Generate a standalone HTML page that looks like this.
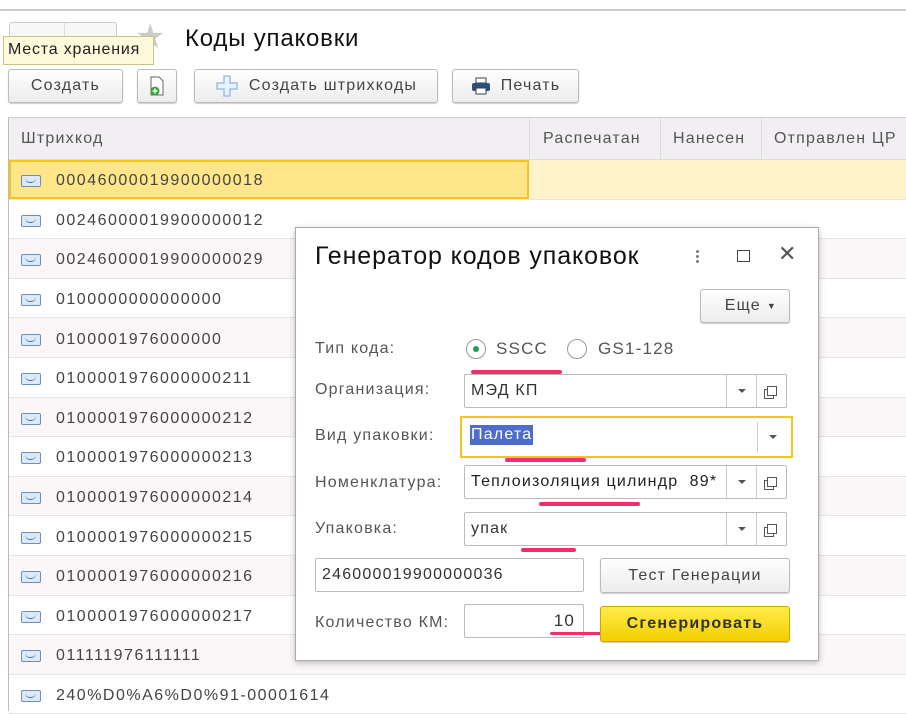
<!DOCTYPE html>
<html><head><meta charset="utf-8"><style>
*{box-sizing:border-box;margin:0;padding:0}
body{width:906px;height:711px;overflow:hidden;background:#fff;font-family:"Liberation Sans",sans-serif;color:#333;position:relative;letter-spacing:1.2px}
.abs{position:absolute}
.btn{position:absolute;height:34px;border:1px solid #bbb;border-radius:3px;background:linear-gradient(#fff,#ececec);box-shadow:0 1px 1px rgba(0,0,0,.2);font-size:16px;color:#444;display:flex;align-items:center;justify-content:center}
.row{position:absolute;left:9px;width:897px;height:39.6px;border-bottom:1px solid #e8e3e6;font-size:16px;color:#444;display:flex;align-items:center;padding-left:12px;padding-top:4px;letter-spacing:1.5px}
.ic{width:20px;height:12px;border:1px solid #6b8fb8;background:#dce9f6;border-radius:2px;margin-right:15px;position:relative}
.ic:after{content:"";position:absolute;left:3px;top:2px;width:11px;height:4px;border-bottom:1.5px solid #3b6fb0;border-radius:0 0 6px 6px}
.lbl{position:absolute;left:19px;font-size:16px;color:#555}
.fld{position:absolute;border:1px solid #bbb;border-radius:2px;background:#fff;font-size:16px;color:#333;display:flex;align-items:center;padding-left:6px}
.dd{position:absolute;top:0;bottom:0;width:30px;border-left:1px solid #ccc;display:flex;align-items:center;justify-content:center}
.dd:after{content:"";border-left:4px solid transparent;border-right:4px solid transparent;border-top:4px solid #555}
.op{position:absolute;right:0;top:0;bottom:0;width:30px;border-left:1px solid #ccc;display:flex;align-items:center;justify-content:center}
.op:after{content:"";width:8px;height:8px;border:1.3px solid #555;box-shadow:-3px 3px 0 -1px #fff,-3px 3px 0 0 #555}
.red{position:absolute;height:4px;background:#f0306a;border-radius:2px}
</style></head><body>
<div class="abs" style="left:0;top:9px;width:906px;height:2px;background:#ccc"></div>
<div class="abs" style="left:9px;top:22px;width:108px;height:30px;border:1px solid #ccc;border-radius:3px;background:#f7f7f7"><div class="abs" style="left:54px;top:0;width:1px;height:28px;background:#ddd"></div></div>
<div class="abs" style="left:135px;top:20px;font-size:34px;color:#ccc;line-height:34px">★</div>
<div class="abs" style="left:3px;top:36px;width:151px;height:29px;background:#fcfadb;border:1px solid #c9c38a;font-size:16px;color:#222;padding:4px 4px;letter-spacing:0.8px">Места хранения</div>
<div class="abs" style="left:185px;top:25px;font-size:24px;color:#111;letter-spacing:0.8px">Коды упаковки</div>
<div class="btn" style="left:8px;top:69px;width:115px">Создать</div>
<div class="btn" style="left:137px;top:69px;width:40px"><svg width="16" height="20"><path d="M2 1h8l4 4v14H2z" fill="#fff" stroke="#666"/><circle cx="6" cy="15" r="4.5" fill="#3aa53a"/><path d="M6 12.5v5M3.5 15h5" stroke="#fff" stroke-width="1.5"/></svg></div>
<div class="btn" style="left:194px;top:69px;width:244px"><svg width="24" height="24" style="margin-right:10px"><path d="M9 2h6v7h7v6h-7v7H9v-7H2V9h7z" fill="#eaf3fd" stroke="#8fb6e3" stroke-width="1.3"/></svg>Создать штрихкоды</div>
<div class="btn" style="left:452px;top:69px;width:127px"><svg width="20" height="18" style="margin-right:10px"><rect x="5" y="1" width="10" height="5" fill="#fff" stroke="#345"/><rect x="1" y="6" width="18" height="8" rx="2" fill="#2e4f77"/><rect x="5" y="11" width="10" height="6" fill="#fff" stroke="#345"/></svg>Печать</div>
<div class="abs" style="left:8px;top:117px;width:898px;height:594px;border-left:1px solid #bbb;border-top:1px solid #ccc"></div>
<div class="abs" style="left:9px;top:118px;width:897px;height:42px;background:#f2eff3;border-bottom:1px solid #ddd;font-size:16px;color:#555">
<div class="abs" style="left:12px;top:12px">Штрихкод</div>
<div class="abs" style="left:520px;top:0;height:42px;border-left:1px solid #ddd;padding:12px 0 0 13px;width:132px">Распечатан</div>
<div class="abs" style="left:651px;top:0;height:42px;border-left:1px solid #ddd;padding:12px 0 0 12px;width:101px">Нанесен</div>
<div class="abs" style="left:752px;top:0;height:42px;border-left:1px solid #ddd;padding:12px 0 0 12px;width:160px;white-space:nowrap">Отправлен ЦР</div>
</div>
<div class="row" style="top:160px;background:#fff3cc"><div class="abs" style="left:0;top:0;width:520px;height:39px;background:#ffe68a;border:2px solid #f5c518"></div><div class="ic" style="z-index:1"></div><span style="z-index:1">00046000019900000018</span></div>
<div class="row" style="top:199.6px"><div class="ic"></div>00246000019900000012</div>
<div class="row" style="top:239.2px;background:#fbf7f9"><div class="ic"></div>00246000019900000029</div>
<div class="row" style="top:278.8px"><div class="ic"></div>0100000000000000</div>
<div class="row" style="top:318.4px;background:#fbf7f9"><div class="ic"></div>0100001976000000</div>
<div class="row" style="top:358px"><div class="ic"></div>0100001976000000211</div>
<div class="row" style="top:397.6px;background:#fbf7f9"><div class="ic"></div>0100001976000000212</div>
<div class="row" style="top:437.2px"><div class="ic"></div>0100001976000000213</div>
<div class="row" style="top:476.8px;background:#fbf7f9"><div class="ic"></div>0100001976000000214</div>
<div class="row" style="top:516.4px"><div class="ic"></div>0100001976000000215</div>
<div class="row" style="top:556px;background:#fbf7f9"><div class="ic"></div>0100001976000000216</div>
<div class="row" style="top:595.6px"><div class="ic"></div>0100001976000000217</div>
<div class="row" style="top:635.2px;background:#fbf7f9"><div class="ic"></div>011111976111111</div>
<div class="row" style="top:674.8px"><div class="ic"></div>240%D0%A6%D0%91-00001614</div>

<div class="abs" style="left:295px;top:227px;width:524px;height:434px;background:#fff;border:1px solid #aaa;box-shadow:0 2px 6px rgba(0,0,0,.25)">
<div class="abs" style="left:19px;top:14px;font-size:25px;color:#111;letter-spacing:0.9px;white-space:nowrap">Генератор кодов упаковок</div>
<div class="abs" style="left:400px;top:21px;width:3px;height:14px;background:radial-gradient(circle,#777 1.3px,transparent 1.6px) 0 0/3px 5px"></div>
<div class="abs" style="left:441px;top:22px;width:13px;height:12px;border:1.5px solid #444"></div>
<div class="abs" style="left:482px;top:13px;font-size:22px;color:#555">✕</div>
<div class="btn" style="left:404px;top:61px;width:90px;height:34px;justify-content:flex-end;padding-right:12px">Еще <span style="font-size:9px;margin-left:6px">▼</span></div>
<div class="lbl" style="top:112px">Тип кода:</div>
<div class="abs" style="left:170px;top:111px;width:20px;height:20px;border:1px solid #999;border-radius:50%"><div class="abs" style="left:6px;top:6px;width:6px;height:6px;border-radius:50%;background:#1f9d55"></div></div>
<div class="abs" style="left:200px;top:111px;font-size:17px;color:#555">SSCC</div>
<div class="abs" style="left:271px;top:111px;width:20px;height:20px;border:1px solid #999;border-radius:50%"></div>
<div class="abs" style="left:302px;top:111px;font-size:17px;color:#555">GS1-128</div>
<div class="red" style="left:175px;top:142px;width:91px"></div>
<div class="lbl" style="top:153px">Организация:</div>
<div class="fld" style="left:168px;top:146px;width:323px;height:34px">МЭД КП<div class="dd" style="right:30px"></div><div class="op"></div></div>
<div class="abs" style="left:164px;top:188px;width:333px;height:42px;border:2px solid #f5c518"></div>
<div class="lbl" style="top:199px">Вид упаковки:</div>
<div class="abs" style="left:174px;top:197px;background:#4f6cc8;color:#fff;font-size:16px;padding:1px 1px">Палета</div>
<div class="abs" style="left:461px;top:194px;height:30px;border-left:1px solid #ccc;width:30px;display:flex;align-items:center;justify-content:center"><div style="border-left:4px solid transparent;border-right:4px solid transparent;border-top:4px solid #555"></div></div>
<div class="red" style="left:209px;top:230px;width:81px"></div>
<div class="lbl" style="top:246px">Номенклатура:</div>
<div class="fld" style="left:168px;top:237px;width:323px;height:34px;color:#222;white-space:nowrap;overflow:hidden">Теплоизоляция цилиндр&nbsp; 89*<div class="dd" style="right:30px;background:#fff"></div><div class="op" style="background:#fff"></div></div>
<div class="red" style="left:243px;top:274px;width:101px"></div>
<div class="lbl" style="top:292px">Упаковка:</div>
<div class="fld" style="left:168px;top:284px;width:323px;height:34px">упак<div class="dd" style="right:30px"></div><div class="op"></div></div>
<div class="red" style="left:225px;top:320px;width:55px"></div>
<div class="fld" style="left:19px;top:330px;width:269px;height:34px;color:#333">246000019900000036</div>
<div class="btn" style="left:304px;top:330px;width:190px;height:35px">Тест Генерации</div>
<div class="lbl" style="top:386px">Количество КМ:</div>
<div class="fld" style="left:168px;top:376px;width:120px;height:34px;justify-content:flex-end;padding-right:8px;font-size:17px">10</div>
<div class="red" style="left:254px;top:404px;width:62px;height:3px"></div>
<div class="btn" style="left:304px;top:378px;width:190px;height:36px;background:linear-gradient(#ffec4a,#f3cf00);border-color:#c9a800;font-weight:bold;color:#333;font-size:16px">Сгенерировать</div>
</div>
</body></html>
